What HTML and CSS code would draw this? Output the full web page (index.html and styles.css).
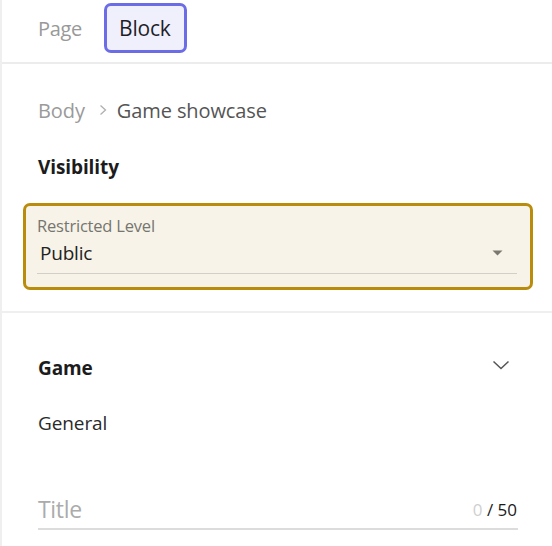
FILE: index.html
```html
<!DOCTYPE html>
<html lang="en">
<head>
<meta charset="utf-8">
<link rel="stylesheet" href="styles.css">
</head>
<body>
<div class="panel">
  <header class="tabs">
    <span class="tab">Page</span>
    <span class="tab active">Block</span>
  </header>

  <section class="block-info">
    <nav class="crumbs">
      <span class="crumb-root">Body</span>
      <svg class="crumb-sep" width="10" height="14" viewBox="0 0 10 14"><path d="M2.5 2.5 L7.5 7 L2.5 11.5" fill="none" stroke="#b0b0b0" stroke-width="1.3"/></svg>
      <span class="crumb-current">Game showcase</span>
    </nav>
    <h2 class="heading">Visibility</h2>
    <div class="select">
      <div class="select-label">Restricted Level</div>
      <div class="select-row">
        <span class="select-value">Public</span>
        <svg class="select-arrow" width="11" height="6" viewBox="0 0 11 6"><path d="M0.5 0.5 L10.5 0.5 L5.5 5.5 Z" fill="#7a7870"/></svg>
      </div>
    </div>
  </section>

  <section class="group">
    <div class="group-head">
      <h2 class="heading">Game</h2>
      <svg class="chev" width="18" height="10" viewBox="0 0 18 10"><path d="M1.5 1.5 L9 8.5 L16.5 1.5" fill="none" stroke="#555" stroke-width="1.5"/></svg>
    </div>
    <div class="sub">General</div>
    <div class="field">
      <span class="placeholder">Title</span>
      <span class="counter"><span class="count-now">0</span> / 50</span>
    </div>
  </section>
</div>
</body>
</html>
```

FILE: styles.css
```css
* { box-sizing: border-box; }
html, body { margin: 0; padding: 0; background: #fff; }
body {
  font-family: "Open Sans", "Noto Sans", sans-serif;
  color: #222;
  width: 552px;
  height: 546px;
  overflow: hidden;
}
.panel {
  border-left: 2px solid #efefef;
  min-height: 546px;
}
.tabs {
  height: 64px;
  border-bottom: 2px solid #ececec;
  display: flex;
  align-items: flex-start;
  gap: 22px;
  padding: 3px 0 0 36px;
}
.tab {
  font-size: 20px;
  color: #999;
  height: 50px;
  line-height: 52px;
  letter-spacing: -0.3px;
}
.tab.active {
  font-size: 21px;
  color: #1e1e2a;
  background: #f0f0fc;
  border: 3px solid #6c6ce6;
  border-radius: 7px;
  padding: 0 13px 0 12px;
  line-height: 45px;
  letter-spacing: -0.2px;
}
.block-info {
  padding: 28px 34px 21px 36px;
  border-bottom: 2px solid #efefef;
}
.crumbs {
  display: flex;
  align-items: center;
  height: 36px;
  font-size: 20px;
  letter-spacing: -0.1px;
}
.crumb-root { color: #9a9a9a; }
.crumb-sep { margin: 0 9px 0 13px; }
.crumb-current { color: #555; }
.heading {
  margin: 0;
  font-size: 19px;
  font-weight: 700;
  color: #1c1c1c;
  letter-spacing: -0.1px;
}
.block-info .heading {
  margin-top: 25px;
  line-height: 28px;
}
.select {
  margin: 22px -15px 0 -15px;
  background: #f7f3e8;
  border: 3px solid #b98c0c;
  border-radius: 7px;
  padding: 10px 13px 13px 11px;
}
.select-label {
  font-size: 16.5px;
  color: #76756f;
  line-height: 20px;
  letter-spacing: -0.2px;
}
.select-row {
  display: flex;
  align-items: center;
  justify-content: space-between;
  height: 38px;
  border-bottom: 1.5px solid #d2cfc6;
  padding: 0 14px 3px 3px;
}
.select-value {
  font-size: 19px;
  color: #222;
  letter-spacing: -0.2px;
}
.group {
  padding: 37px 34px 0 36px;
}
.group-head {
  display: flex;
  align-items: center;
  justify-content: space-between;
  height: 36px;
}
.chev { margin-right: 8px; margin-top: -6px; }
.sub {
  margin-top: 19px;
  font-size: 19px;
  color: #2a2a2a;
  line-height: 36px;
  letter-spacing: -0.1px;
}
.field {
  margin-top: 51px;
  display: flex;
  align-items: center;
  justify-content: space-between;
  height: 38px;
  border-bottom: 2px solid #dcdcdc;
  padding-bottom: 2px;
}
.placeholder {
  font-size: 23px;
  color: #ababab;
  letter-spacing: -0.3px;
}
.counter {
  font-size: 17px;
  color: #1a1a1a;
  padding-right: 1px;
}
.count-now { color: #cfcfcf; }
```
